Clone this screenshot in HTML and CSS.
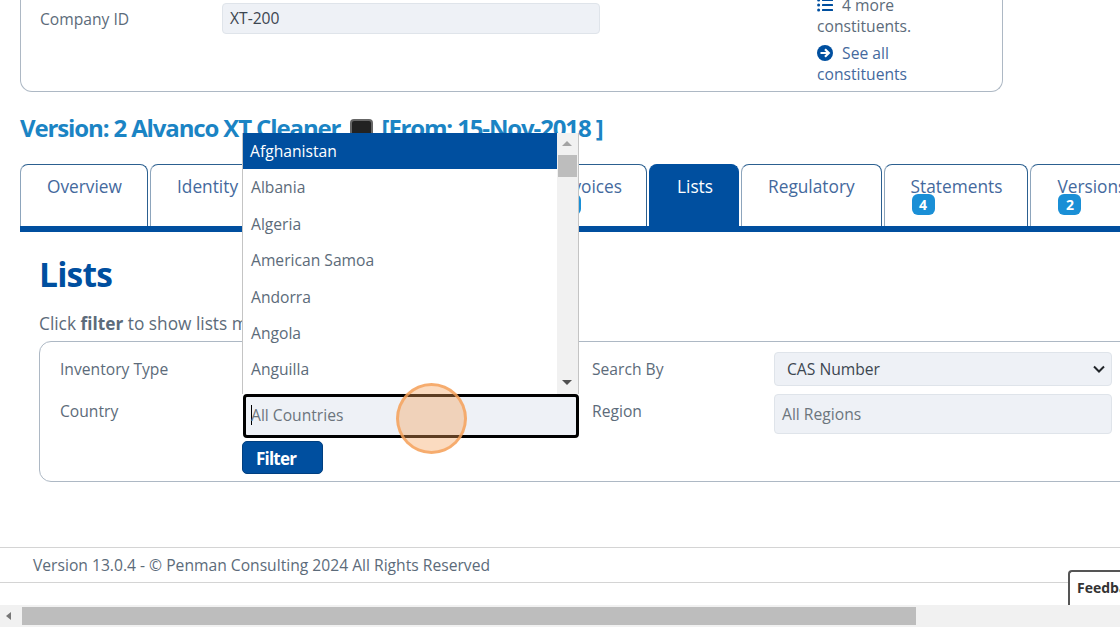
FILE: index.html
```html
<!DOCTYPE html>
<html lang="en">
<head>
    <meta charset="UTF-8">
    <meta name="viewport" content="width=device-width, initial-scale=1.0">
    <title>Lists</title>
    <link rel="stylesheet" href="styles.css">
</head>
<body>
    <div class="page">
        <div class="company-card">
            <div class="company-field">
                <label class="company-label">Company ID</label>
                <div class="company-input">XT-200</div>
            </div>
            <div class="constituents">
                <p class="more-line">
                    <svg class="icon" viewBox="0 0 16 16"><g fill="#004f9f"><circle cx="1.6" cy="3" r="1.5"/><circle cx="1.6" cy="8" r="1.5"/><circle cx="1.6" cy="13" r="1.5"/><rect x="5" y="2" width="11" height="2" rx=".5"/><rect x="5" y="7" width="11" height="2" rx=".5"/><rect x="5" y="12" width="11" height="2" rx=".5"/></g></svg>
                    4 more constituents.
                </p>
                <p class="see-all">
                    <svg class="icon" viewBox="0 0 16 16"><circle cx="8" cy="8" r="8" fill="#004f9f"/><path d="M3.5 8h8M8 4.2 11.8 8 8 11.8" fill="none" stroke="#fff" stroke-width="2.2"/></svg>
                    See all constituents
                </p>
            </div>
        </div>

        <h3 class="version-title">Version: 2 Alvanco XT Cleaner <span class="flag"></span> [From: 15-Nov-2018 ]</h3>

        <div class="tabs">
            <div class="tab tab-overview">Overview</div>
            <div class="tab tab-identity">Identity</div>
            <div class="tab tab-hidden">Constituents</div>
            <div class="tab tab-invoices">Invoices<span class="badge">0</span></div>
            <div class="tab active">Lists</div>
            <div class="tab">Regulatory</div>
            <div class="tab tab-statements">Statements<span class="badge">4</span></div>
            <div class="tab">Versions<span class="badge">2</span></div>
        </div>

        <h2 class="section-title">Lists</h2>
        <p class="hint">Click <b>filter</b> to show lists matching the selected options.</p>

        <div class="filter-card">
            <div class="filter-row first">
                <label class="filter-label">Inventory Type</label>
                <div class="filter-control"></div>
                <label class="filter-label col-right">Search By</label>
                <div class="select-box">
                    CAS Number
                    <svg class="chevron" viewBox="0 0 12 8"><path d="M1 1.5 6 6.5 11 1.5" fill="none" stroke="#212529" stroke-width="2"/></svg>
                </div>
            </div>
            <div class="filter-row second">
                <label class="filter-label">Country</label>
                <div class="country-input"><span class="caret"></span>All Countries</div>
                <label class="filter-label col-right">Region</label>
                <div class="region-input">All Regions</div>
            </div>
            <button class="filter-btn">Filter</button>
        </div>

        <div class="footer">Version 13.0.4 - © Penman Consulting 2024 All Rights Reserved</div>
    </div>

    <div class="hscroll">
        <span class="hscroll-arrow"></span>
        <div class="hscroll-thumb"></div>
    </div>

    <!-- open dropdown of the country field -->
    <div class="country-list">
        <ul class="country-items">
            <li class="selected">Afghanistan</li>
            <li>Albania</li>
            <li>Algeria</li>
            <li>American Samoa</li>
            <li>Andorra</li>
            <li>Angola</li>
            <li>Anguilla</li>
        </ul>
        <div class="list-scroll">
            <span class="arrow-up"></span>
            <div class="list-thumb"></div>
            <span class="arrow-down"></span>
        </div>
    </div>

    <div class="click-marker"></div>
    <div class="feedback">Feedback</div>
</body>
</html>
```

FILE: styles.css
```css
html, body {
    margin: 0;
    height: 100%;
    overflow: hidden;
}
body {
    position: relative;
    display: flex;
    flex-direction: column;
    font-family: "Open Sans", sans-serif;
    font-size: 15.65px;
    line-height: 24px;
    color: #5c6b7a;
    background-color: white;
}
p, h2, h3, ul {
    margin: 0;
    padding: 0;
}
.page {
    flex: 1;
    min-height: 0;
    overflow: hidden;
}

/* top card */
.company-card {
    display: flex;
    box-sizing: border-box;
    width: 983px;
    height: 112px;
    margin: -20px 0 0 20px;
    padding: 0 19px;
    border: 1px solid #adb8c4;
    border-top: 0;
    border-radius: 0 0 12px 12px;
}
.company-field {
    display: flex;
    width: 777px;
    padding-top: 23px;
}
.company-label {
    width: 182px;
    padding-top: 4px;
}
.company-input {
    box-sizing: border-box;
    width: 378px;
    height: 31px;
    padding: 0 7px;
    line-height: 28px;
    color: #3c4650;
    background-color: #eef1f6;
    border: 1px solid #dfe4ea;
    border-radius: 4px;
}
.constituents {
    width: 125px;
    line-height: 21px;
}
.more-line {
    padding-top: 15px;
}
.see-all {
    margin-top: 6px;
    color: #44699d;
}
.icon {
    width: 16px;
    height: 16px;
    margin-right: 5px;
    vertical-align: -2px;
}

.version-title {
    margin: 19px 0 19px 20px;
    font-size: 24px;
    line-height: 34px;
    font-weight: 700;
    letter-spacing: -1.13px;
    white-space: nowrap;
    color: #1b84c4;
}
.flag {
    display: inline-block;
    box-sizing: border-box;
    width: 23px;
    height: 20px;
    margin: 0 3px 0 5px;
    vertical-align: -2px;
    background-color: #222;
    border: 2px solid #666;
    border-radius: 4px;
}

/* tabs */
.tabs {
    display: flex;
    gap: 2px;
    width: 1200px;
    height: 62px;
    margin-left: 20px;
    font-size: 17.3px;
    border-bottom: 6px solid #004f9f;
}
.tabs::after {
    content: "";
    flex: 1;
}
.tab {
    display: flex;
    flex-direction: column;
    align-items: flex-start;
    box-sizing: border-box;
    height: 62px;
    padding: 10px 26px 0;
    color: #44699d;
    border: 1px solid #2c6090;
    border-bottom: 0;
    border-left-color: #8da5bc;
    border-radius: 8px 8px 0 0;
}
.tab-overview {
    width: 128px;
}
.tab-identity {
    width: 117px;
}
.tab-hidden {
    width: 262px;
}
.tab-invoices {
    width: 114px;
    padding-left: 23px;
}
.tab-statements {
    padding-right: 25px;
}
.tab.active {
    padding-left: 27px;
    padding-right: 25px;
    color: white;
    background-color: #004f9f;
    border-color: #004f9f;
}
.badge {
    width: 23px;
    height: 21px;
    margin: -5px 0 0 1px;
    font-size: 14px;
    line-height: 21px;
    font-weight: 700;
    text-align: center;
    color: white;
    background-color: #1a8fd6;
    border-radius: 6px;
}

.section-title {
    margin: 20px 0 16px 39px;
    font-size: 33.5px;
    line-height: 44px;
    font-weight: 700;
    letter-spacing: -0.8px;
    color: #004f9f;
}
.hint {
    margin-left: 39px;
    font-size: 17.3px;
    white-space: nowrap;
}

/* filter form */
.filter-card {
    box-sizing: border-box;
    width: 1100px;
    height: 141px;
    margin: 5px 0 65px 39px;
    padding: 10px 20px 0;
    border: 1px solid #adb8c4;
    border-radius: 12px;
}
.filter-row {
    display: flex;
    align-items: flex-start;
}
.filter-row.first {
    margin-bottom: 8px;
}
.filter-row.second {
    margin-bottom: 3px;
}
.filter-label {
    flex: none;
    width: 183px;
    padding-top: 5px;
}
.filter-label.col-right {
    width: 182px;
    margin-left: 13px;
}
.filter-control {
    width: 336px;
}
.select-box {
    display: flex;
    align-items: center;
    justify-content: space-between;
    box-sizing: border-box;
    width: 338px;
    height: 34px;
    padding: 0 6px 0 12px;
    color: #3c4650;
    background-color: #eef1f6;
    border: 1px solid #dfe4ea;
    border-radius: 4px;
}
.chevron {
    width: 12px;
    height: 8px;
}
.country-input {
    display: flex;
    align-items: center;
    flex: none;
    box-sizing: border-box;
    width: 336px;
    height: 44px;
    padding: 0 0 2px 5px;
    color: #6c757d;
    background-color: #eef1f6;
    border: 3px solid black;
    border-radius: 4px;
}
.caret {
    width: 1px;
    height: 20px;
    margin-right: -1px;
    background-color: black;
}
.region-input {
    box-sizing: border-box;
    width: 338px;
    height: 40px;
    padding: 7px 7px;
    color: #6c757d;
    background-color: #eef1f6;
    border: 1px solid #dfe4ea;
    border-radius: 4px;
}
.filter-btn {
    display: block;
    width: 81px;
    height: 33px;
    margin-left: 182px;
    padding: 2px 0 0 13px;
    font-family: "Open Sans", sans-serif;
    font-size: 17px;
    font-weight: 700;
    letter-spacing: -0.8px;
    text-align: left;
    color: white;
    background-color: #004f9f;
    border: 1px solid #003f80;
    border-radius: 5px;
}

.footer {
    box-sizing: border-box;
    height: 36px;
    padding: 5px 0 0 33px;
    border-top: 1px solid #d4d4d4;
    border-bottom: 1px solid #d4d4d4;
}

/* page scrollbar */
.hscroll {
    display: flex;
    align-items: center;
    flex: none;
    height: 22px;
    padding-left: 6px;
    background-color: #f1f1f1;
}
.hscroll-arrow {
    width: 0;
    height: 0;
    margin-right: 11px;
    border-top: 4px solid transparent;
    border-bottom: 4px solid transparent;
    border-right: 5px solid #777;
}
.hscroll-thumb {
    width: 894px;
    height: 18px;
    background-color: #bdbdbd;
}

/* floating pieces */
.country-list {
    position: absolute;
    left: 242px;
    top: 133px;
    display: flex;
    box-sizing: border-box;
    width: 337px;
    height: 261px;
    background-color: white;
    border: 1px solid #c4c4c4;
    border-top: 0;
    border-bottom: 0;
}
.country-items {
    flex: 1;
    list-style: none;
}
.country-items li {
    height: 36.4px;
    padding-left: 8px;
    line-height: 37px;
}
.country-items .selected {
    padding-left: 7px;
    line-height: 36px;
    color: white;
    background-color: #004f9f;
}
.list-scroll {
    position: relative;
    flex: none;
    width: 21px;
    background-color: #f1f1f1;
}
.arrow-up, .arrow-down {
    position: absolute;
    left: 5px;
    width: 0;
    height: 0;
    border-left: 5px solid transparent;
    border-right: 5px solid transparent;
}
.arrow-up {
    top: 8px;
    border-bottom: 5px solid #a3a3a3;
}
.arrow-down {
    bottom: 9px;
    border-top: 5px solid #505050;
}
.list-thumb {
    position: absolute;
    left: 1px;
    top: 22px;
    width: 19px;
    height: 22px;
    background-color: #bdbdbd;
}
.click-marker {
    position: absolute;
    left: 396px;
    top: 383px;
    box-sizing: border-box;
    width: 71px;
    height: 71px;
    background-color: rgba(245, 160, 90, 0.38);
    border: 3px solid rgba(245, 160, 90, 0.8);
    border-radius: 50%;
}
.feedback {
    position: absolute;
    right: -30px;
    top: 570px;
    box-sizing: border-box;
    width: 82px;
    height: 35px;
    padding: 4px 0 0 7px;
    font-size: 14px;
    font-weight: 700;
    white-space: nowrap;
    color: #333;
    background-color: white;
    border: 2px solid #555;
    border-right: 0;
    border-bottom: 0;
    border-radius: 4px 0 0 0;
}
```
